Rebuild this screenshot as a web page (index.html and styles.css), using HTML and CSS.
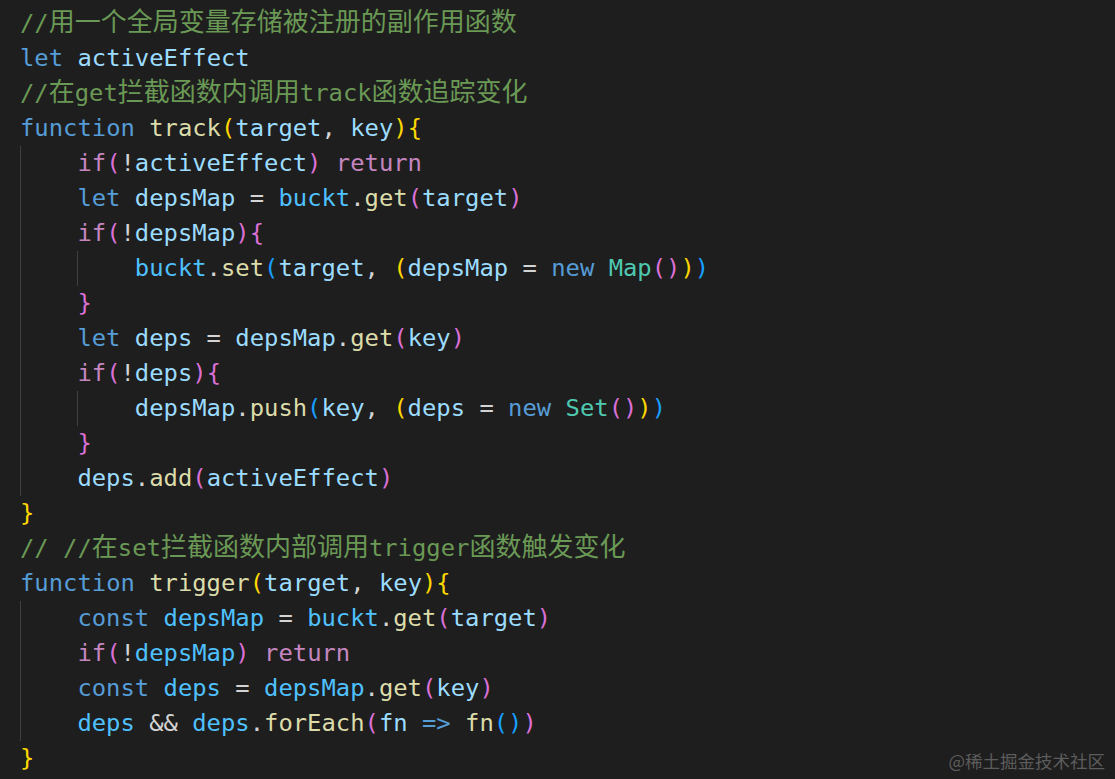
FILE: index.html
```html
<!DOCTYPE html>
<html lang="zh">
<head>
<meta charset="utf-8">
<title>track / trigger</title>
<link rel="stylesheet" href="styles.css">
</head>
<body>
<div class="editor">
  <div class="code">
    <div class="ln"><span class="cm">//<span class="zh">用一个全局变量存储被注册的副作用函数</span></span></div>
    <div class="ln"><span class="kw">let</span> <span class="v">activeEffect</span></div>
    <div class="ln"><span class="cm">//<span class="zh">在</span>get<span class="zh">拦截函数内调用</span>track<span class="zh">函数追踪变化</span></span></div>
    <div class="ln"><span class="kw">function</span> <span class="fn">track</span><span class="b1">(</span><span class="v">target</span>, <span class="v">key</span><span class="b1">)</span><span class="b1">{</span></div>
    <div class="ln"><span class="ind"></span><span class="ctl">if</span><span class="b2">(</span>!<span class="v">activeEffect</span><span class="b2">)</span> <span class="ctl">return</span></div>
    <div class="ln"><span class="ind"></span><span class="kw">let</span> <span class="v">depsMap</span> = <span class="c">buckt</span>.<span class="fn">get</span><span class="b2">(</span><span class="v">target</span><span class="b2">)</span></div>
    <div class="ln"><span class="ind"></span><span class="ctl">if</span><span class="b2">(</span>!<span class="v">depsMap</span><span class="b2">)</span><span class="b2">{</span></div>
    <div class="ln"><span class="ind"></span><span class="ind"></span><span class="c">buckt</span>.<span class="fn">set</span><span class="b3">(</span><span class="v">target</span>, <span class="b1">(</span><span class="v">depsMap</span> = <span class="kw">new</span> <span class="cls">Map</span><span class="b2">()</span><span class="b1">)</span><span class="b3">)</span></div>
    <div class="ln"><span class="ind"></span><span class="b2">}</span></div>
    <div class="ln"><span class="ind"></span><span class="kw">let</span> <span class="v">deps</span> = <span class="v">depsMap</span>.<span class="fn">get</span><span class="b2">(</span><span class="v">key</span><span class="b2">)</span></div>
    <div class="ln"><span class="ind"></span><span class="ctl">if</span><span class="b2">(</span>!<span class="v">deps</span><span class="b2">)</span><span class="b2">{</span></div>
    <div class="ln"><span class="ind"></span><span class="ind"></span><span class="v">depsMap</span>.<span class="fn">push</span><span class="b3">(</span><span class="v">key</span>, <span class="b1">(</span><span class="v">deps</span> = <span class="kw">new</span> <span class="cls">Set</span><span class="b2">()</span><span class="b1">)</span><span class="b3">)</span></div>
    <div class="ln"><span class="ind"></span><span class="b2">}</span></div>
    <div class="ln"><span class="ind"></span><span class="v">deps</span>.<span class="fn">add</span><span class="b2">(</span><span class="v">activeEffect</span><span class="b2">)</span></div>
    <div class="ln"><span class="b1">}</span></div>
    <div class="ln"><span class="cm">// //<span class="zh">在</span>set<span class="zh">拦截函数内部调用</span>trigger<span class="zh">函数触发变化</span></span></div>
    <div class="ln"><span class="kw">function</span> <span class="fn">trigger</span><span class="b1">(</span><span class="v">target</span>, <span class="v">key</span><span class="b1">)</span><span class="b1">{</span></div>
    <div class="ln"><span class="ind"></span><span class="kw">const</span> <span class="c">depsMap</span> = <span class="c">buckt</span>.<span class="fn">get</span><span class="b2">(</span><span class="v">target</span><span class="b2">)</span></div>
    <div class="ln"><span class="ind"></span><span class="ctl">if</span><span class="b2">(</span>!<span class="c">depsMap</span><span class="b2">)</span> <span class="ctl">return</span></div>
    <div class="ln"><span class="ind"></span><span class="kw">const</span> <span class="c">deps</span> = <span class="c">depsMap</span>.<span class="fn">get</span><span class="b2">(</span><span class="v">key</span><span class="b2">)</span></div>
    <div class="ln"><span class="ind"></span><span class="c">deps</span> &amp;&amp; <span class="c">deps</span>.<span class="fn">forEach</span><span class="b2">(</span><span class="fp">fn</span> <span class="kw">=&gt;</span> <span class="fn">fn</span><span class="b3">()</span><span class="b2">)</span></div>
    <div class="ln"><span class="b1">}</span></div>
  </div>
  <div class="mark">@稀土掘金技术社区</div>
</div>
</body>
</html>
```
FILE: styles.css
```css
html, body {
  margin: 0;
  padding: 0;
  background: #1e1e1e;
}

.editor {
  position: relative;
  width: 1115px;
  height: 779px;
  overflow: hidden;
  background: #1e1e1e;
}

.code {
  padding: 6px 0 0 20px;
  font-family: "DejaVu Sans Mono", "Liberation Mono", monospace;
  font-size: 23.85px;
  color: #d4d4d4;
}

.ln {
  height: 35px;
  line-height: 35px;
  white-space: pre;
}

.ind {
  display: inline-block;
  width: 4ch;
  height: 35px;
  vertical-align: top;
  box-sizing: border-box;
  border-left: 1px solid #404040;
}

.zh {
  font-family: "Noto Sans CJK SC", sans-serif;
  font-size: 26px;
  line-height: 1;
}

.cm { color: #6a9955; }
.kw { color: #569cd6; }
.ctl { color: #c586c0; }
.v { color: #9cdcfe; }
.fp { color: #9cdcfe; }
.c { color: #4fc1ff; }
.fn { color: #dcdcaa; }
.cls { color: #4ec9b0; }
.b1 { color: #ffd700; }
.b2 { color: #da70d6; }
.b3 { color: #179fff; }

.mark {
  position: absolute;
  right: 10px;
  bottom: 6px;
  font-family: "Noto Sans CJK SC", sans-serif;
  font-size: 17.5px;
  color: #5c5c5c;
}
```
